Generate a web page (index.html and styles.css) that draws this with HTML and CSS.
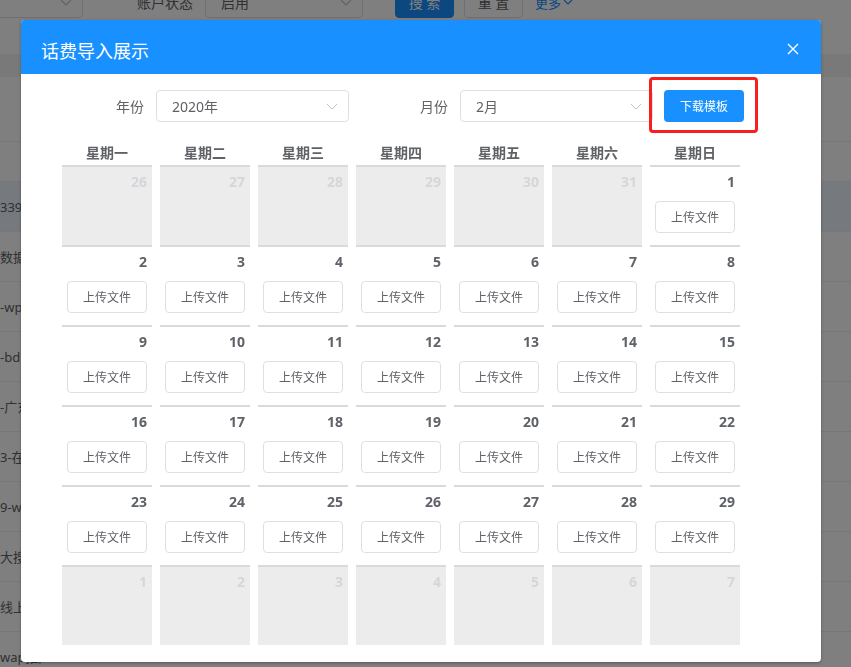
FILE: index.html
```html
<!DOCTYPE html>
<html lang="zh-CN">
<head>
<meta charset="utf-8">
<title>话费导入展示</title>
<link rel="stylesheet" href="styles.css">
</head>
<body>
<div class="page">
  <div class="filters">
    <div class="bg-select bg-select-1"><span></span><svg class="chev" width="12" height="7" viewBox="0 0 12 7"><path d="M1 1l5 5 5-5" fill="none" stroke="#c0c4cc" stroke-width="1.2"/></svg></div>
    <div class="bg-label">账户状态</div>
    <div class="bg-select bg-select-2"><span>启用</span><svg class="chev" width="12" height="7" viewBox="0 0 12 7"><path d="M1 1l5 5 5-5" fill="none" stroke="#c0c4cc" stroke-width="1.2"/></svg></div>
    <div class="bg-btn bg-btn-primary">搜 索</div>
    <div class="bg-btn">重 置</div>
    <div class="bg-link">更多 <svg width="10" height="6" viewBox="0 0 10 6"><path d="M1 1l4 4 4-4" fill="none" stroke="#1890ff" stroke-width="1.2"/></svg></div>
  </div>
  <div class="toolbar-band"></div>
  <div class="bg-block"></div>
  <div class="bg-thead"></div>
  <div class="bg-row active"><span class="bg-cell">3390128</span></div>
  <div class="bg-row"><span class="bg-cell">数据统计</span></div>
  <div class="bg-row"><span class="bg-cell">-wp推广</span></div>
  <div class="bg-row"><span class="bg-cell">-bd'推广</span></div>
  <div class="bg-row"><span class="bg-cell">-广东推广</span></div>
  <div class="bg-row"><span class="bg-cell">3-在线</span></div>
  <div class="bg-row"><span class="bg-cell">9-wap</span></div>
  <div class="bg-row"><span class="bg-cell">大搜推广</span></div>
  <div class="bg-row"><span class="bg-cell">线上</span></div>
  <div class="bg-row"><span class="bg-cell">wap推广</span></div>
</div>

<div class="mask"></div>

<div class="dialog">
  <div class="dialog-header">
    <span class="dialog-title">话费导入展示</span>
    <svg class="close" width="12" height="12" viewBox="0 0 12 12"><path d="M1 1L11 11M11 1L1 11" stroke="#fff" stroke-width="1.4" fill="none"/></svg>
  </div>
  <div class="dialog-body">
    <div class="form-row">
      <label class="form-label">年份</label>
      <div class="select"><span>2020年</span><svg class="chev" width="12" height="7" viewBox="0 0 12 7"><path d="M1 1l5 5 5-5" fill="none" stroke="#c0c4cc" stroke-width="1"/></svg></div>
      <label class="form-label form-label-2">月份</label>
      <div class="select"><span>2月</span><svg class="chev" width="12" height="7" viewBox="0 0 12 7"><path d="M1 1l5 5 5-5" fill="none" stroke="#c0c4cc" stroke-width="1"/></svg></div>
      <button class="btn-primary">下载模板</button>
    </div>

    <div class="week">
      <div>星期一</div><div>星期二</div><div>星期三</div><div>星期四</div><div>星期五</div><div>星期六</div><div>星期日</div>
    </div>

    <div class="calendar">
      <div class="cell off"><div class="num">26</div></div>
      <div class="cell off"><div class="num">27</div></div>
      <div class="cell off"><div class="num">28</div></div>
      <div class="cell off"><div class="num">29</div></div>
      <div class="cell off"><div class="num">30</div></div>
      <div class="cell off"><div class="num">31</div></div>
      <div class="cell"><div class="num">1</div><button class="upload">上传文件</button></div>

      <div class="cell"><div class="num">2</div><button class="upload">上传文件</button></div>
      <div class="cell"><div class="num">3</div><button class="upload">上传文件</button></div>
      <div class="cell"><div class="num">4</div><button class="upload">上传文件</button></div>
      <div class="cell"><div class="num">5</div><button class="upload">上传文件</button></div>
      <div class="cell"><div class="num">6</div><button class="upload">上传文件</button></div>
      <div class="cell"><div class="num">7</div><button class="upload">上传文件</button></div>
      <div class="cell"><div class="num">8</div><button class="upload">上传文件</button></div>

      <div class="cell"><div class="num">9</div><button class="upload">上传文件</button></div>
      <div class="cell"><div class="num">10</div><button class="upload">上传文件</button></div>
      <div class="cell"><div class="num">11</div><button class="upload">上传文件</button></div>
      <div class="cell"><div class="num">12</div><button class="upload">上传文件</button></div>
      <div class="cell"><div class="num">13</div><button class="upload">上传文件</button></div>
      <div class="cell"><div class="num">14</div><button class="upload">上传文件</button></div>
      <div class="cell"><div class="num">15</div><button class="upload">上传文件</button></div>

      <div class="cell"><div class="num">16</div><button class="upload">上传文件</button></div>
      <div class="cell"><div class="num">17</div><button class="upload">上传文件</button></div>
      <div class="cell"><div class="num">18</div><button class="upload">上传文件</button></div>
      <div class="cell"><div class="num">19</div><button class="upload">上传文件</button></div>
      <div class="cell"><div class="num">20</div><button class="upload">上传文件</button></div>
      <div class="cell"><div class="num">21</div><button class="upload">上传文件</button></div>
      <div class="cell"><div class="num">22</div><button class="upload">上传文件</button></div>

      <div class="cell"><div class="num">23</div><button class="upload">上传文件</button></div>
      <div class="cell"><div class="num">24</div><button class="upload">上传文件</button></div>
      <div class="cell"><div class="num">25</div><button class="upload">上传文件</button></div>
      <div class="cell"><div class="num">26</div><button class="upload">上传文件</button></div>
      <div class="cell"><div class="num">27</div><button class="upload">上传文件</button></div>
      <div class="cell"><div class="num">28</div><button class="upload">上传文件</button></div>
      <div class="cell"><div class="num">29</div><button class="upload">上传文件</button></div>

      <div class="cell off"><div class="num">1</div></div>
      <div class="cell off"><div class="num">2</div></div>
      <div class="cell off"><div class="num">3</div></div>
      <div class="cell off"><div class="num">4</div></div>
      <div class="cell off"><div class="num">5</div></div>
      <div class="cell off"><div class="num">6</div></div>
      <div class="cell off"><div class="num">7</div></div>
    </div>
  </div>
  <div class="highlight"></div>
</div>
</body>
</html>
```

FILE: styles.css
```css
* { box-sizing: border-box; }

html, body {
  margin: 0;
  padding: 0;
  width: 851px;
  height: 667px;
  overflow: hidden;
  background: #fff;
  font-family: "Noto Sans", "Noto Sans CJK SC", sans-serif;
  color: #606266;
}

/* ---------- background page ---------- */
.page {
  width: 851px;
}

.filters {
  display: flex;
  align-items: center;
  height: 32px;
  margin-top: -14px;
  font-size: 14px;
}

.bg-select {
  height: 32px;
  border: 1px solid #dcdfe6;
  border-radius: 4px;
  display: flex;
  align-items: center;
  justify-content: space-between;
  padding: 0 10px 0 15px;
  color: #606266;
}

.bg-select-1 { width: 193px; margin-left: -110px; }
.bg-select-2 { width: 158px; }

.bg-label {
  width: 122px;
  text-align: right;
  padding-right: 12px;
  color: #606266;
}

.bg-btn {
  width: 59px;
  height: 32px;
  margin-left: 10px;
  border: 1px solid #dcdfe6;
  border-radius: 4px;
  display: flex;
  align-items: center;
  justify-content: center;
  font-size: 14px;
  color: #606266;
}

.bg-btn-primary {
  margin-left: 32px;
  background: #1890ff;
  border-color: #1890ff;
  color: #fff;
}

.bg-link {
  margin-left: 12px;
  color: #1890ff;
  font-size: 13px;
  display: flex;
  align-items: center;
  gap: 2px;
}

.toolbar-band {
  height: 23px;
  margin-top: 36px;
  background: #f3f3f3;
}

.bg-block {
  height: 65px;
  border-bottom: 1px solid #ebeef5;
}

.bg-thead {
  height: 40px;
  border-bottom: 1px solid #ebeef5;
}

.bg-row {
  height: 50px;
  border-bottom: 1px solid #ebeef5;
  display: flex;
  align-items: center;
  font-size: 13px;
  color: #606266;
}

.bg-row.active { background: #ecf5ff; }

.bg-cell { white-space: nowrap; }

/* ---------- mask ---------- */
.mask {
  position: fixed;
  inset: 0;
  background: rgba(0, 0, 0, 0.5);
}

/* ---------- dialog ---------- */
.dialog {
  position: absolute;
  left: 21px;
  top: 20px;
  width: 800px;
  background: #fff;
  border-radius: 4px;
  box-shadow: 0 1px 3px rgba(0, 0, 0, 0.3);
}

.dialog-header {
  height: 54px;
  background: #1890ff;
  border-radius: 4px 4px 0 0;
  display: flex;
  align-items: center;
  justify-content: space-between;
  padding: 0 22px 0 20px;
}

.dialog-title {
  color: #fff;
  font-size: 18px;
  line-height: 24px;
  margin-top: 8px;
}

.close { margin-top: 4px; }

.dialog-body {
  padding: 16px 41px 17px 41px;
}

.form-row {
  display: flex;
  align-items: center;
  height: 32px;
}

.form-label {
  width: 94px;
  text-align: right;
  padding-right: 12px;
  font-size: 14px;
  color: #606266;
}

.form-label-2 {
  margin-left: 17px;
}

.select {
  width: 193px;
  height: 32px;
  border: 1px solid #dcdfe6;
  border-radius: 4px;
  display: flex;
  align-items: center;
  justify-content: space-between;
  padding: 0 10px 0 15px;
  font-size: 14px;
  color: #606266;
}

.btn-primary {
  margin-left: 11px;
  width: 80px;
  height: 32px;
  border: none;
  border-radius: 4px;
  background: #1890ff;
  color: #fff;
  font-family: inherit;
  font-size: 12px;
  padding: 0;
}

.week {
  display: grid;
  grid-template-columns: repeat(7, 90px);
  column-gap: 8px;
  margin-top: 19px;
  height: 24px;
  line-height: 24px;
  text-align: center;
  font-size: 14px;
  font-weight: 700;
  color: #606266;
}

.calendar {
  display: grid;
  grid-template-columns: repeat(7, 90px);
  grid-auto-rows: 80px;
  column-gap: 8px;
}

.cell {
  border-top: 2px solid #d9d9de;
  padding-top: 4px;
  display: flex;
  flex-direction: column;
  align-items: center;
}

.cell.off {
  background: #ececec;
}

.num {
  align-self: stretch;
  text-align: right;
  padding-right: 5px;
  height: 22px;
  line-height: 22px;
  font-size: 14px;
  font-weight: 700;
  color: #5f6268;
}

.cell.off .num {
  color: #d6d6da;
}

.upload {
  margin-top: 8px;
  width: 80px;
  height: 32px;
  padding: 0;
  border: 1px solid #dcdfe6;
  border-radius: 4px;
  background: #fff;
  font-family: inherit;
  font-size: 12px;
  color: #606266;
}

.highlight {
  position: absolute;
  left: 628px;
  top: 57px;
  width: 109px;
  height: 56px;
  border: 3px solid #f5211e;
  border-radius: 4px;
  pointer-events: none;
}
```
